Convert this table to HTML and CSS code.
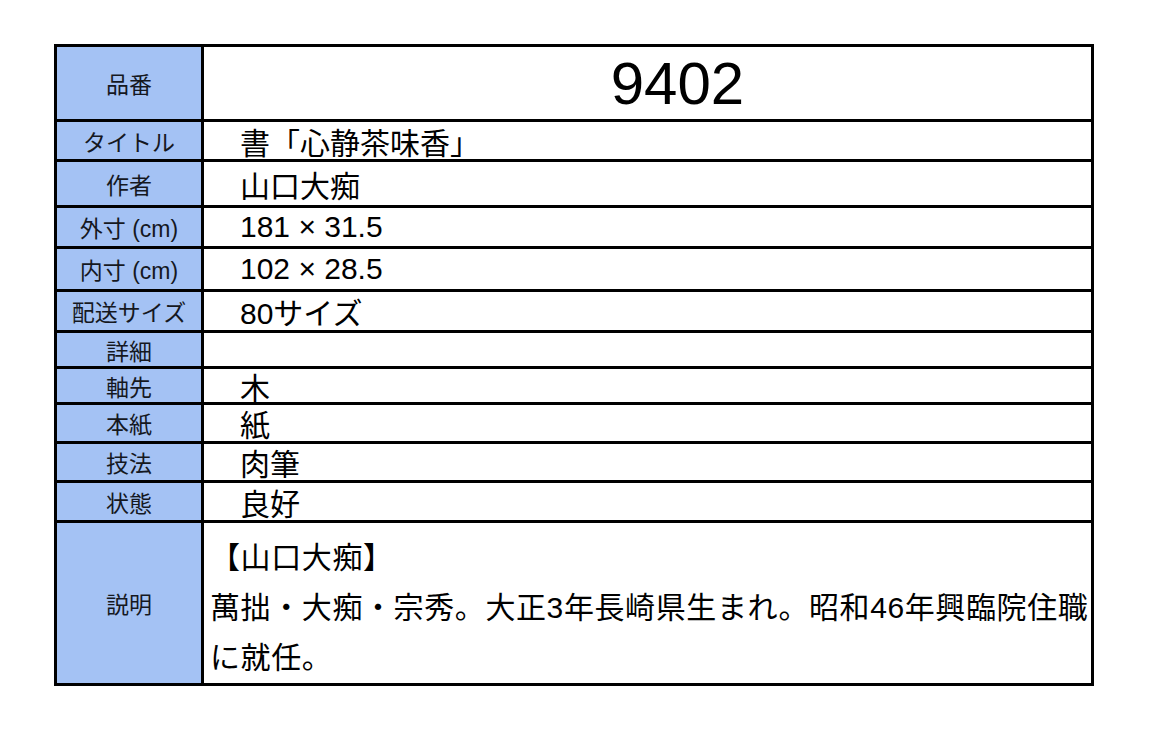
FILE: index.html
```html
<!DOCTYPE html>
<html lang="ja">
<head>
<meta charset="utf-8">
<link rel="stylesheet" href="styles.css">
</head>
<body>
<div class="sheet">
  <div class="label">品番</div>
  <div class="value value-code">9402</div>
  <div class="label">タイトル</div>
  <div class="value">書「心静茶味香」</div>
  <div class="label">作者</div>
  <div class="value">山口大痴</div>
  <div class="label">外寸 (cm)</div>
  <div class="value">181 × 31.5</div>
  <div class="label">内寸 (cm)</div>
  <div class="value">102 × 28.5</div>
  <div class="label">配送サイズ</div>
  <div class="value">80サイズ</div>
  <div class="label">詳細</div>
  <div class="value"></div>
  <div class="label">軸先</div>
  <div class="value">木</div>
  <div class="label">本紙</div>
  <div class="value">紙</div>
  <div class="label">技法</div>
  <div class="value">肉筆</div>
  <div class="label">状態</div>
  <div class="value">良好</div>
  <div class="label">説明</div>
  <div class="value value-desc">
    <p class="desc-head">【山口大痴】</p>
    <p class="desc-body">萬拙・大痴・宗秀。大正3年長崎県生まれ。昭和46年興臨院住職<br>に就任。</p>
  </div>
</div>
</body>
</html>
```
FILE: styles.css
```css
html, body {
  margin: 0;
  padding: 0;
  background: #ffffff;
}

body {
  font-family: "Liberation Sans", "Noto Sans CJK JP", sans-serif;
  color: #000;
}

.sheet {
  margin: 44px 0 0 54px;
  width: 1034px;
  display: grid;
  grid-template-columns: 144px 887px;
  grid-template-rows: 72px 37px 43px 38px 40px 38px 33px 33px 36px 36px 37px 160px;
  gap: 3px;
  padding: 3px;
  background: #000;
}

.label {
  background: #a4c2f4;
  color: #15181f;
  font-size: 23px;
  display: flex;
  align-items: center;
  justify-content: center;
  white-space: nowrap;
}

.value {
  background: #fff;
  font-size: 30px;
  display: flex;
  align-items: center;
  padding-left: 36px;
  white-space: nowrap;
}

.value-code {
  font-size: 60px;
  justify-content: center;
  padding-left: 60px;
}

.value-desc {
  display: block;
  padding: 10px 0 0 6px;
  white-space: normal;
  letter-spacing: 0.6px;
}

.value-desc p {
  margin: 0;
  line-height: 50px;
}
```
